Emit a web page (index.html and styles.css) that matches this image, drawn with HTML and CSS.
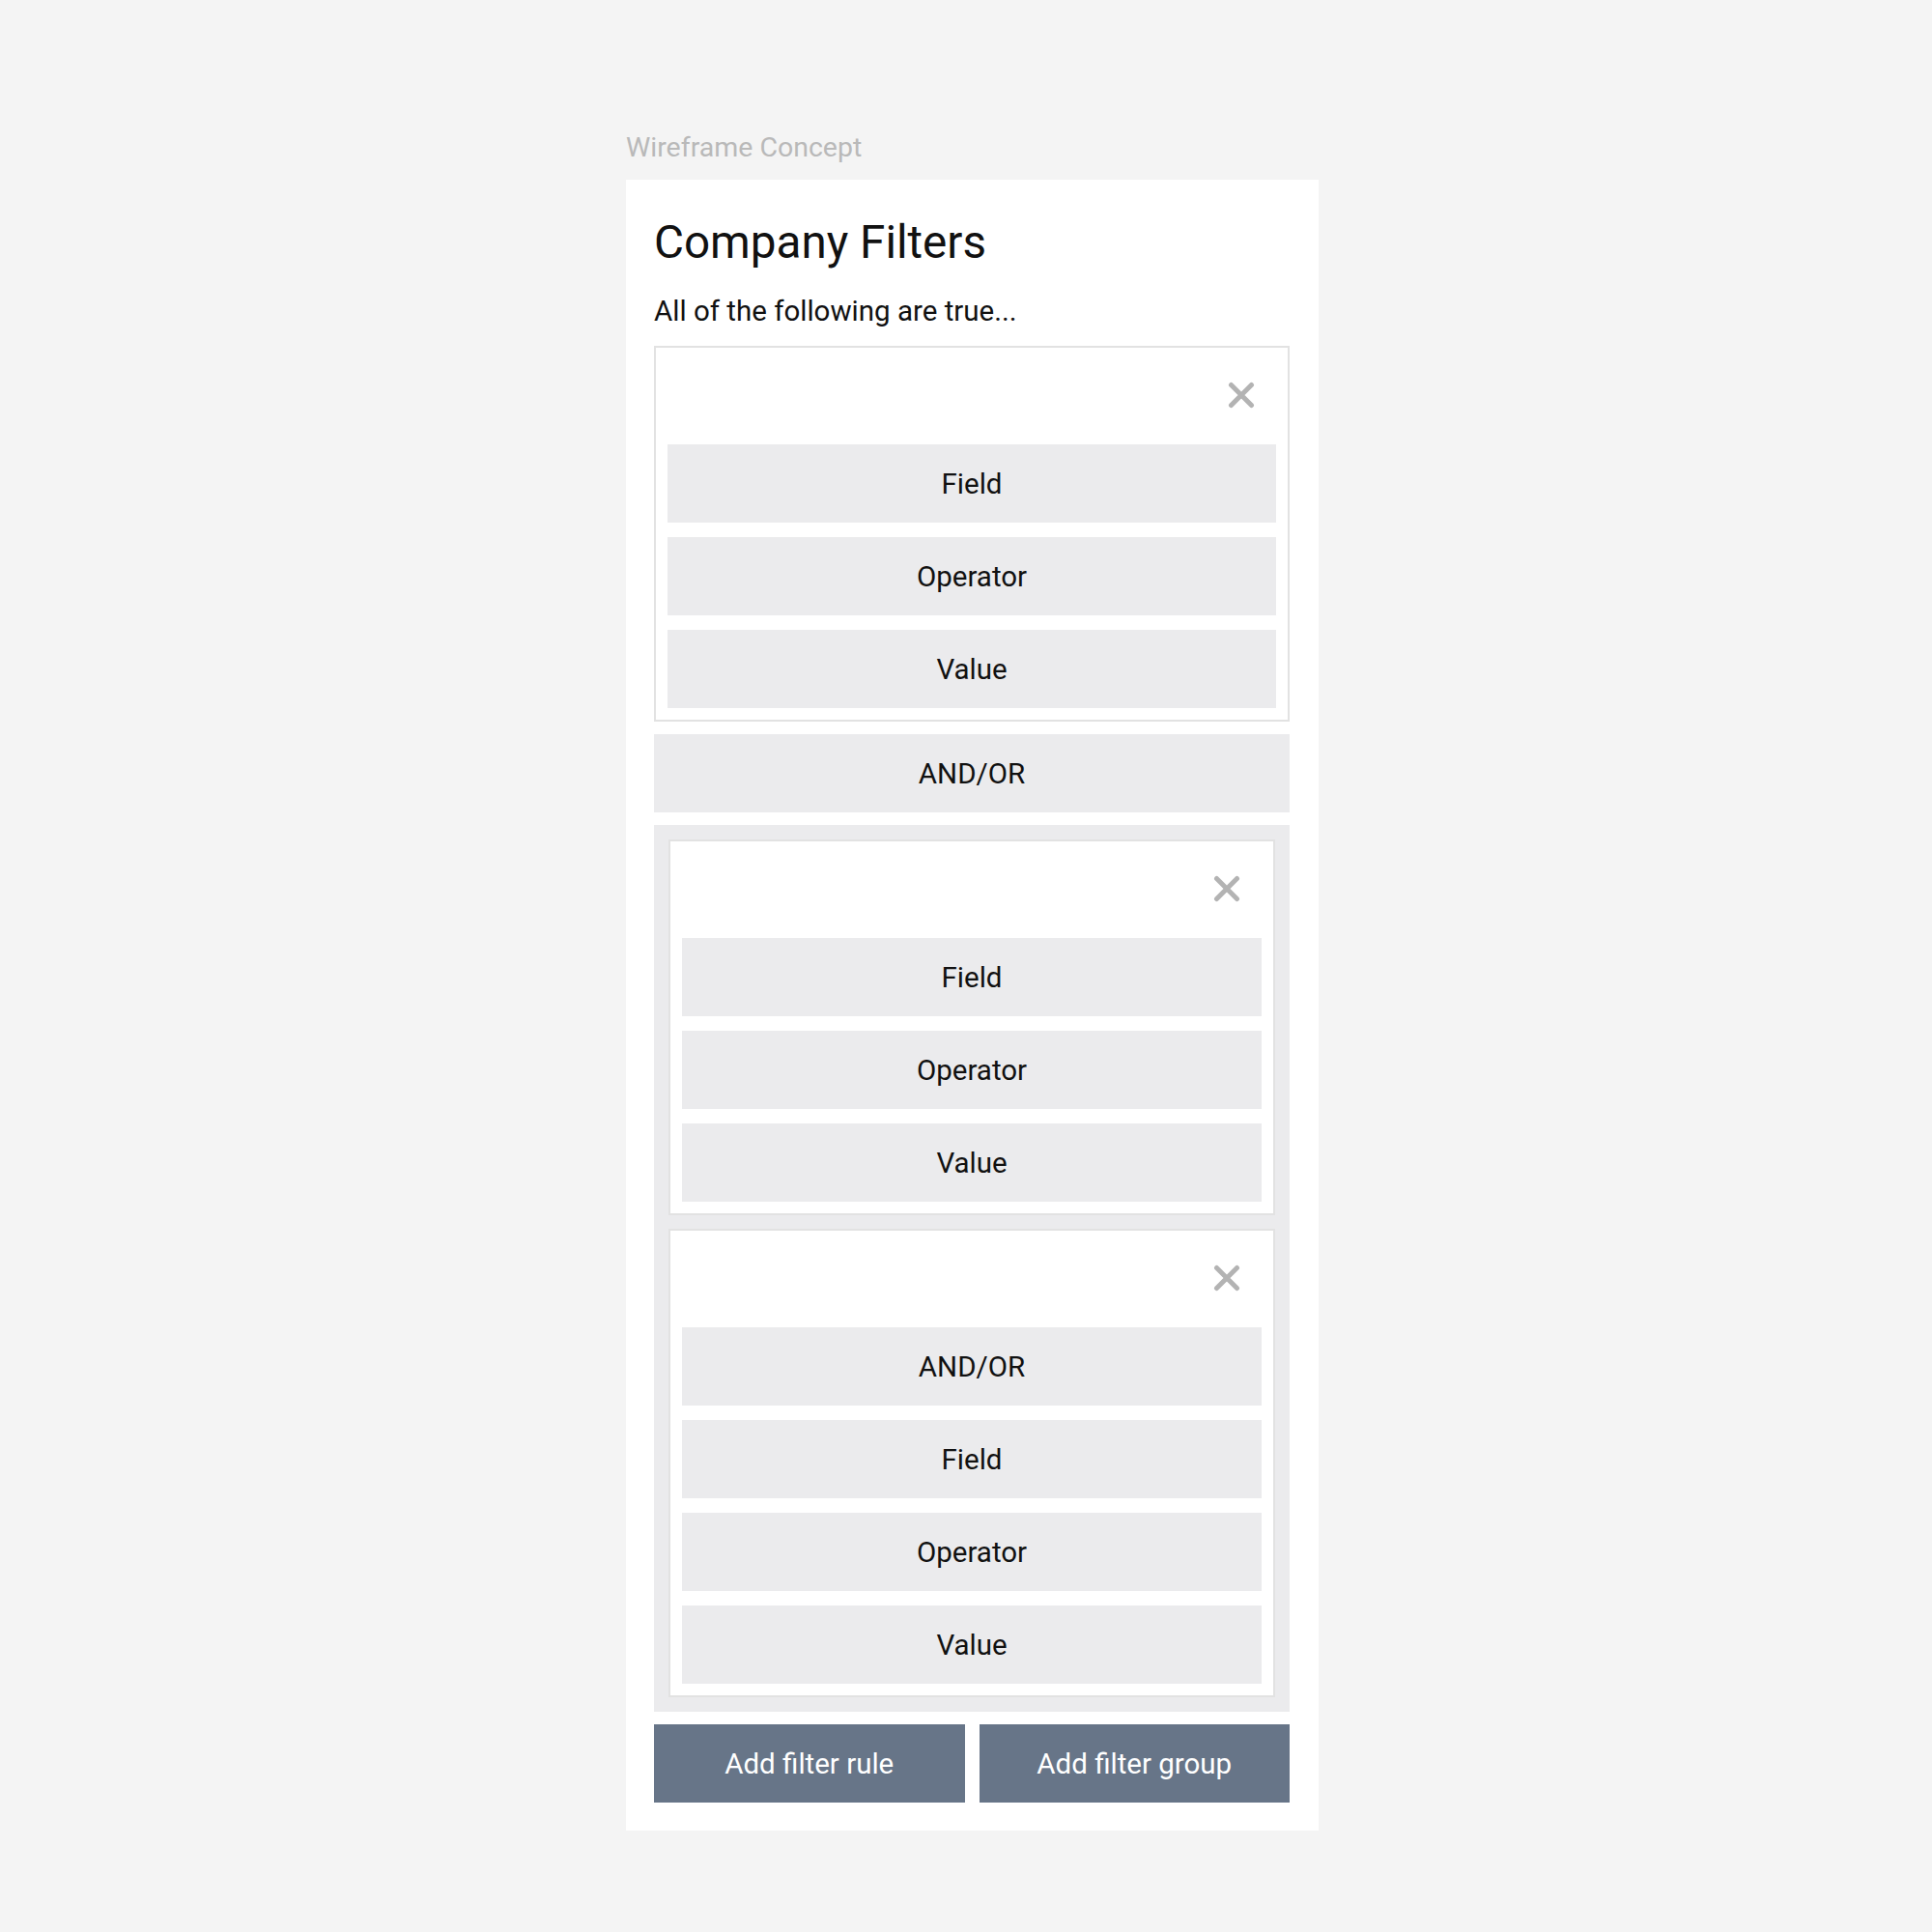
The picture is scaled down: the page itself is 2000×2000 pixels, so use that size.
FILE: index.html
```html
<!DOCTYPE html>
<html>
<head>
<meta charset="utf-8">
<link rel="stylesheet" href="styles.css">
</head>
<body>
<div class="page">
  <div class="caption">Wireframe Concept</div>
  <div class="card">
    <h1 class="title">Company Filters</h1>
    <p class="subtitle">All of the following are true...</p>
    <div class="stack">
      <div class="rule">
        <div class="rule-head"><span class="close"><svg viewBox="0 0 28 28" width="28" height="28"><path d="M3.5 3.5L24.5 24.5M24.5 3.5L3.5 24.5" stroke="#b3b3b3" stroke-width="5" stroke-linecap="round"/></svg></span></div>
        <div class="slot">Field</div>
        <div class="slot">Operator</div>
        <div class="slot">Value</div>
      </div>
      <div class="slot wide">AND/OR</div>
      <div class="group">
        <div class="rule">
          <div class="rule-head"><span class="close"><svg viewBox="0 0 28 28" width="28" height="28"><path d="M3.5 3.5L24.5 24.5M24.5 3.5L3.5 24.5" stroke="#b3b3b3" stroke-width="5" stroke-linecap="round"/></svg></span></div>
          <div class="slot">Field</div>
          <div class="slot">Operator</div>
          <div class="slot">Value</div>
        </div>
        <div class="rule">
          <div class="rule-head"><span class="close"><svg viewBox="0 0 28 28" width="28" height="28"><path d="M3.5 3.5L24.5 24.5M24.5 3.5L3.5 24.5" stroke="#b3b3b3" stroke-width="5" stroke-linecap="round"/></svg></span></div>
          <div class="slot">AND/OR</div>
          <div class="slot">Field</div>
          <div class="slot">Operator</div>
          <div class="slot">Value</div>
        </div>
      </div>
      <div class="actions">
        <div class="btn">Add filter rule</div>
        <div class="btn">Add filter group</div>
      </div>
    </div>
  </div>
</div>
</body>
</html>
```
FILE: styles.css
```css
html, body {
  margin: 0;
  padding: 0;
  background: #f4f4f4;
  font-family: Roboto, "Liberation Sans", sans-serif;
}
.page {
  padding: 137px 0 0 648px;
  width: 717px;
}
.caption {
  font-size: 28.5px;
  line-height: 32px;
  color: #b9b9b9;
  margin-bottom: 17px;
}
.card {
  background: #ffffff;
  padding: 37px 30px 29px 29px;
}
.title {
  margin: 0;
  font-size: 47.6px;
  font-weight: 400;
  line-height: 56px;
  color: #111111;
}
.subtitle {
  margin: 27px 0 20px;
  font-size: 29.5px;
  line-height: 32px;
  color: #111111;
}
.stack {
  display: flex;
  flex-direction: column;
  gap: 13px;
}
.rule {
  background: #ffffff;
  border: 2px solid #e2e2e2;
  padding: 12px;
  display: flex;
  flex-direction: column;
  gap: 15px;
}
.rule-head {
  height: 73px;
  display: flex;
  justify-content: flex-end;
}
.close {
  width: 73px;
  height: 73px;
  display: flex;
  align-items: center;
  justify-content: center;
}
.slot {
  height: 81px;
  background: #ebebed;
  display: flex;
  align-items: center;
  justify-content: center;
  font-size: 29.5px;
  color: #111111;
}
.group {
  background: #ebebed;
  padding: 15px;
  display: flex;
  flex-direction: column;
  gap: 14px;
}
.actions {
  display: grid;
  grid-template-columns: 1fr 1fr;
  gap: 15px;
}
.btn {
  height: 81px;
  background: #677588;
  color: #ffffff;
  font-size: 29.5px;
  display: flex;
  align-items: center;
  justify-content: center;
}
```
